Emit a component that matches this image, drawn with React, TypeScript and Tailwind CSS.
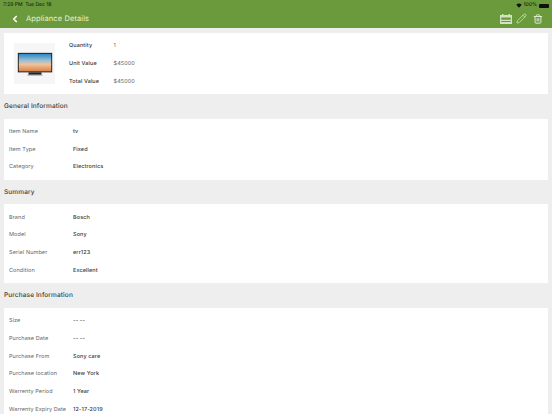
import { ChevronLeft, Pencil, Trash2 } from 'lucide-react';

type Row = { label: string; value: string };

const general: Row[] = [
  { label: 'Item Name', value: 'tv' },
  { label: 'Item Type', value: 'Fixed' },
  { label: 'Category', value: 'Electronics' },
];

const summary: Row[] = [
  { label: 'Brand', value: 'Bosch' },
  { label: 'Model', value: 'Sony' },
  { label: 'Serial Number', value: 'err123' },
  { label: 'Condition', value: 'Excellent' },
];

const purchase: Row[] = [
  { label: 'Size', value: '-- --' },
  { label: 'Purchase Date', value: '-- --' },
  { label: 'Purchase From', value: 'Sony care' },
  { label: 'Purchase location', value: 'New York' },
  { label: 'Warrenty Period', value: '1 Year' },
  { label: 'Warrenty Expiry Date', value: '12-17-2019' },
];

function Section({ title, rows }: { title: string; rows: Row[] }) {
  return (
    <div>
      <div className="h-[24.5px] flex items-center pt-[1px] pl-[4px] text-[6.5px] font-medium tracking-[0.12px] text-[#3a3a3a]">{title}</div>
      <div className="mx-[4px] bg-white pt-[4.5px] pb-[3.5px] px-[5px]">
        {rows.map((r) => (
          <div key={r.label} className="h-[17.75px] flex items-center text-[5.5px] tracking-[0.1px]">
            <div className="w-[64px] text-[#666]">{r.label}</div>
            <div className="font-medium text-[#3a3a3a]">{r.value}</div>
          </div>
        ))}
      </div>
    </div>
  );
}

function TvPicture() {
  return (
    <svg width="36" height="26" viewBox="0 0 38 28">
      <defs>
        <linearGradient id="sky" x1="0" y1="0" x2="0" y2="1">
          <stop offset="0" stopColor="#2b86c4" />
          <stop offset="0.35" stopColor="#8fbcd8" />
          <stop offset="0.6" stopColor="#ecc49c" />
          <stop offset="1" stopColor="#dd7f45" />
        </linearGradient>
      </defs>
      <rect x="0.5" y="2" width="37" height="21" fill="#1c1c1c" />
      <rect x="1.5" y="3" width="35" height="19" fill="url(#sky)" />
      <rect x="12" y="23" width="14" height="2.5" fill="#222" />
      <rect x="11" y="25.5" width="16" height="0.8" fill="#777" />
    </svg>
  );
}

export default function App() {
  return (
    <div className="w-[552px] h-[414px] overflow-hidden bg-[#eeeeee] font-['Inter',sans-serif] [text-rendering:geometricPrecision]">
      <div className="h-[28px] bg-[#6a9a3c] text-white">
        <div className="h-[9px] flex items-center justify-between pt-[2px] px-[3px] text-[5px] text-[#1c2a14]">
          <span className="font-medium">7:29 PM&nbsp;&nbsp;Tue Dec 18</span>
          <span className="flex items-center gap-[2px] font-medium">
            <svg width="6" height="5" viewBox="0 0 12 10">
              <path d="M6 9.5 0.5 3.5a8 8 0 0 1 11 0z" fill="#111" />
            </svg>
            100%
            <span className="w-[10px] h-[4px] bg-[#111] rounded-[1px]" />
          </span>
        </div>
        <div className="h-[19px] flex items-center">
          <ChevronLeft className="w-[10px] h-[10px] ml-[10px] text-white" strokeWidth={4} />
          <span className="ml-[6px] text-[7.5px] tracking-[0.1px] text-[#e6f0da]">Appliance Details</span>
          <div className="ml-auto mr-[9px] flex items-center gap-[4px] text-[#e6f0da]">
            <svg width="12" height="10" viewBox="0 0 12 10" fill="currentColor" opacity="0.85">
              <rect x="2" y="0" width="1.5" height="2" />
              <rect x="8.5" y="0" width="1.5" height="2" />
              <path d="M0 1h12V10H0zM1.2 3.6v2.2h9.6V3.6zM1.2 7v1h9.6V7z" fillRule="evenodd" />
            </svg>
            <Pencil className="w-[11px] h-[11px]" strokeWidth={1.4} />
            <Trash2 className="w-[10px] h-[10px] ml-[2px]" strokeWidth={2.2} />
          </div>
        </div>
      </div>

      <div className="mt-[5px] mx-[4px] h-[61px] bg-white flex items-center">
        <div className="ml-[10px] w-[41px] h-[41px] bg-[#f6f6f6] flex items-center justify-center">
          <TvPicture />
        </div>
        <div className="ml-[14px] pt-[1px] text-[5.5px] tracking-[0.1px]">
          <div className="h-[17.75px] flex items-center">
            <div className="w-[44.5px] font-medium text-[#3a3a3a]">Quantity</div>
            <div className="text-[#666]">1</div>
          </div>
          <div className="h-[17.75px] flex items-center">
            <div className="w-[44.5px] font-medium text-[#3a3a3a]">Unit Value</div>
            <div className="text-[#666]">$45000</div>
          </div>
          <div className="h-[17.75px] flex items-center">
            <div className="w-[44.5px] font-medium text-[#3a3a3a]">Total Value</div>
            <div className="text-[#666]">$45000</div>
          </div>
        </div>
      </div>

      <Section title="General Information" rows={general} />
      <Section title="Summary" rows={summary} />
      <Section title="Purchase Information" rows={purchase} />
    </div>
  );
}
